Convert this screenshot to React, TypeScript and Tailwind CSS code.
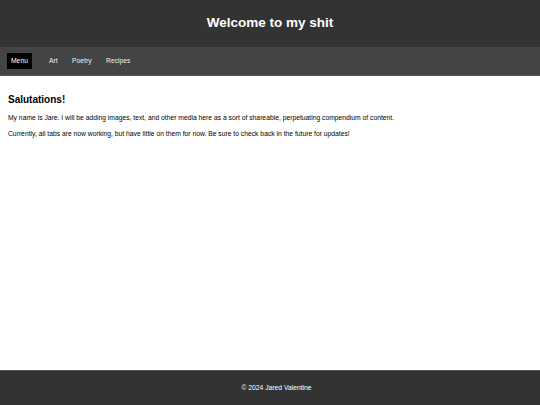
export default function App() {
  return (
    <div
      className="flex min-h-screen flex-col bg-white text-black"
      style={{ fontFamily: '"Liberation Sans", Arial, sans-serif' }}
    >
      <header className="flex h-[47px] items-center justify-center bg-[#333] text-white">
        <h1 className="text-[13.5px] font-bold">Welcome to my shit</h1>
      </header>
      <nav className="flex h-[29px] items-center gap-[14.5px] border-b border-[#555] bg-[#444] px-[7px] text-[6.75px] text-[#eee]">
        <a className="mr-[2.5px] flex h-[16px] items-center bg-black px-[4px] text-white">Menu</a>
        <a>Art</a>
        <a>Poetry</a>
        <a>Recipes</a>
      </nav>
      <main className="flex-1 px-[8px] pt-[16px]">
        <h2 className="mb-[6px] text-[10px] font-bold">Salutations!</h2>
        <p className="mb-[6px] text-[6.75px]">
          My name is Jare. I will be adding images, text, and other media here as a sort of shareable, perpetuating compendium of content.
        </p>
        <p className="text-[6.75px]">
          Currently, all tabs are now working, but have little on them for now. Be sure to check back in the future for updates!
        </p>
      </main>
      <footer className="flex h-[35px] items-center justify-center border-t border-[#555] bg-[#333] pl-[13px] text-[6.75px] text-white">
        © 2024 Jared Valentine
      </footer>
    </div>
  );
}
